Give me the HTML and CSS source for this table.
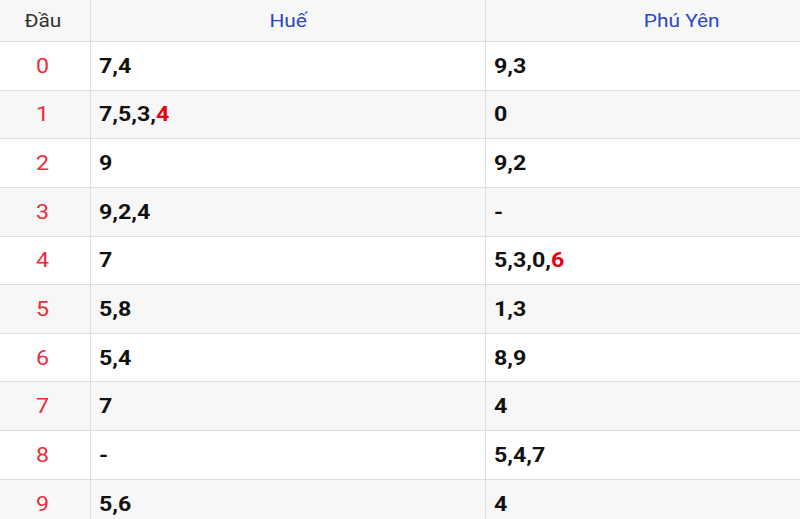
FILE: index.html
```html
<!DOCTYPE html>
<html lang="vi">
<head>
<meta charset="utf-8">
<link rel="stylesheet" href="styles.css">
</head>
<body>
<table class="loto">
  <thead>
    <tr><th class="c-head"><span class="t">Đầu</span></th><th class="c-prov"><span class="t">Huế</span></th><th class="c-prov c-last"><span class="t">Phú Yên</span></th></tr>
  </thead>
  <tbody>
    <tr><td class="c-head"><span class="t">0</span></td><td><span class="t">7,4</span></td><td><span class="t">9,3</span></td></tr>
    <tr><td class="c-head"><span class="t">1</span></td><td><span class="t">7,5,3,<span class="hit">4</span></span></td><td><span class="t">0</span></td></tr>
    <tr><td class="c-head"><span class="t">2</span></td><td><span class="t">9</span></td><td><span class="t">9,2</span></td></tr>
    <tr><td class="c-head"><span class="t">3</span></td><td><span class="t">9,2,4</span></td><td><span class="t">-</span></td></tr>
    <tr><td class="c-head"><span class="t">4</span></td><td><span class="t">7</span></td><td><span class="t">5,3,0,<span class="hit">6</span></span></td></tr>
    <tr><td class="c-head"><span class="t">5</span></td><td><span class="t">5,8</span></td><td><span class="t">1,3</span></td></tr>
    <tr><td class="c-head"><span class="t">6</span></td><td><span class="t">5,4</span></td><td><span class="t">8,9</span></td></tr>
    <tr><td class="c-head"><span class="t">7</span></td><td><span class="t">7</span></td><td><span class="t">4</span></td></tr>
    <tr><td class="c-head"><span class="t">8</span></td><td><span class="t">-</span></td><td><span class="t">5,4,7</span></td></tr>
    <tr><td class="c-head"><span class="t">9</span></td><td><span class="t">5,6</span></td><td><span class="t">4</span></td></tr>
  </tbody>
</table>
</body>
</html>
```
FILE: styles.css
```css
html, body {
  margin: 0;
  padding: 0;
  background: #ffffff;
  font-family: Roboto, "Liberation Sans", sans-serif;
  overflow: hidden;
}
.loto {
  width: 800px;
  border-collapse: collapse;
  table-layout: fixed;
}
.loto th, .loto td {
  border-bottom: 1px solid #dedede;
  border-right: 1px solid #dedede;
  padding: 0;
}
.loto th:last-child, .loto td:last-child {
  border-right: none;
}
.t {
  display: inline-block;
  transform: scaleX(1.16);
}
.loto th {
  height: 41px;
  background: #f7f7f7;
  font-weight: 400;
  font-size: 18px;
  text-align: center;
  color: #333;
}
.loto th.c-head { width: 86px; padding-right: 4px; }
.loto th.c-prov { color: #2b47c6; }
.loto th.c-last { padding-left: 78px; }
.loto th:nth-child(2) { width: 394px; }
.loto td {
  height: 47.65px;
  font-size: 20px;
  font-weight: 700;
  color: #111;
  padding-left: 8px;
}
.loto td .t { transform-origin: left center; }
.loto td.c-head {
  text-align: center;
  padding-left: 0;
  padding-right: 5px;
  font-weight: 400;
  color: #ec2b3a;
}
.loto td.c-head .t { transform-origin: center; }
.loto tbody tr:nth-child(even) td {
  background: #f7f7f7;
}
.hit {
  color: #e8000f;
}
```
